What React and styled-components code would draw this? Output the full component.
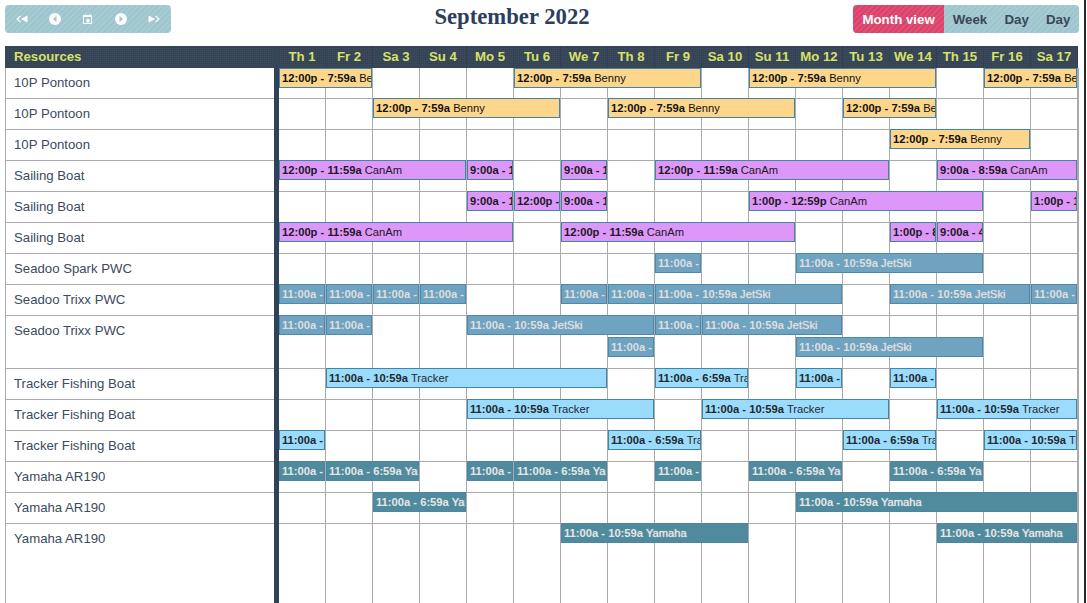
import React from 'react'
import styled, { createGlobalStyle } from 'styled-components'

const GlobalStyle = createGlobalStyle`
  html, body { margin: 0; padding: 0; height: 100%; background: #fff; overflow: hidden; }
  #root { height: 100%; }
`

const stripes = (a, b) => `repeating-linear-gradient(135deg, ${a} 0 2px, ${b} 2px 4px)`

const Page = styled.div`
  display: flex;
  height: 603px;
  overflow: hidden;
  font-family: "Liberation Sans", Arial, sans-serif;
`
const Main = styled.div`
  width: 1074px;
  margin-left: 5px;
  padding-top: 5px;
  display: flex;
  flex-direction: column;
`
const WindowEdge = styled.div`
  width: 2px;
  margin-left: 5px;
  background: #23282b;
`
const Toolbar = styled.div`
  display: flex;
  justify-content: space-between;
  align-items: flex-start;
  height: 28px;
  margin-bottom: 13px;
`
const Title = styled.h2`
  margin: 0;
  font-family: "Liberation Serif", "Times New Roman", serif;
  font-size: 22.7px;
  line-height: 24px;
  font-weight: bold;
  color: #2c3e5c;
`
const ButtonGroup = styled.div`
  display: flex;
  height: 28px;
  border-radius: 4px;
  overflow: hidden;
  background: ${stripes('#9dc5ce', '#a7cbd3')};
`
const NavButton = styled.div`
  width: 33.2px;
  display: flex;
  align-items: center;
  justify-content: center;
`
const ViewButton = styled.div`
  display: flex;
  align-items: center;
  padding: 0 ${p => (p.$active ? '9.3px' : '8.6px')};
  font-size: 13.3px;
  font-weight: bold;
  color: ${p => (p.$active ? '#fff' : '#3b4657')};
  background: ${p => (p.$active ? stripes('#d9436a', '#e04f75') : 'transparent')};
`
const HeaderRow = styled.div`
  display: flex;
  width: 1073px;
  height: 22px;
  color: #d6e268;
  font-size: 13.2px;
  font-weight: bold;
  line-height: 21px;
  background-color: #3c4b5d;
  background-image:
    repeating-linear-gradient(90deg, rgba(20, 32, 46, 0.12) 0 1px, transparent 1px 2px),
    repeating-linear-gradient(0deg, rgba(20, 32, 46, 0.12) 0 1px, transparent 1px 2px);
`
const ResourcesHead = styled.div`
  width: 260px;
  padding-left: 9px;
  border-right: 5px solid #34465a;
`
const DayHead = styled.div`
  width: 46px;
  text-align: center;
  border-right: 1px solid #2f4054;
`
const Body = styled.div`
  flex: 1;
  display: flex;
  min-height: 0;
`
const ResourceColumn = styled.div`
  width: 268px;
  border-left: 1px solid #aaa;
`
const ResourceRow = styled.div`
  box-sizing: border-box;
  height: ${p => 31 + (p.$lanes - 1) * 22}px;
  padding: 6px 0 0 8px;
  border-bottom: 1px solid #aaa;
  font-size: 13.2px;
  line-height: 17px;
  color: #3c4a5e;
  &:last-child { border-bottom: none; }
`
const Divider = styled.div`
  width: 5px;
  background: #2f4257;
`
const DayColumn = styled.div`
  width: 799px;
  border-right: 1px solid #aaa;
  background: repeating-linear-gradient(90deg, transparent 0 46px, #aaa 46px 47px);
`
const EventRow = styled.div`
  box-sizing: border-box;
  display: grid;
  grid-template-columns: repeat(17, 47px);
  grid-auto-rows: 22px;
  height: ${p => 31 + (p.$lanes - 1) * 22}px;
  border-bottom: 1px solid #aaa;
  &:first-child { padding-top: 1px; }
  &:last-child { border-bottom: none; }
`
const kinds = {
  benny: { bg: '#fed68b', color: '#111', border: '#3f86a8' },
  canam: { bg: '#dc97f9', color: '#1d1a22', border: '#3f86a8' },
  jetski: { bg: '#6fa3c0', color: '#dedede', border: '#4a8ab0', heavy: true },
  tracker: { bg: '#9bdcfd', color: '#23282c', border: '#3f86a8' },
  yamaha: { bg: '#508b9d', color: '#e6e6e6', border: '#4b87a5', heavy: true },
}
const Event = styled.div`
  box-sizing: border-box;
  position: relative;
  height: 20px;
  margin: -1px 1px 0 0;
  padding: 0 0 0 2px;
  overflow: hidden;
  white-space: nowrap;
  font-size: 11.2px;
  line-height: 18px;
  grid-column: ${p => p.$day} / span ${p => p.$span};
  grid-row: ${p => p.$lane};
  background: ${p => kinds[p.$kind].bg};
  color: ${p => kinds[p.$kind].color};
  border: 1px solid ${p => kinds[p.$kind].border};
`
const EventLabel = styled.span`
  text-shadow: ${p => (kinds[p.$kind].heavy ? '0 0 1px currentColor' : 'none')};
`

const days = ['Th 1', 'Fr 2', 'Sa 3', 'Su 4', 'Mo 5', 'Tu 6', 'We 7', 'Th 8', 'Fr 9', 'Sa 10', 'Su 11', 'Mo 12', 'Tu 13', 'We 14', 'Th 15', 'Fr 16', 'Sa 17']

const B = ['benny', '12:00p - 7:59a', 'Benny']
const C1 = ['canam', '12:00p - 11:59a', 'CanAm']
const C2 = ['canam', '9:00a - 11:59a', 'CanAm']
const C3 = ['canam', '9:00a - 8:59a', 'CanAm']
const C4 = ['canam', '1:00p - 12:59p', 'CanAm']
const C5 = ['canam', '1:00p - 8:59a', 'CanAm']
const C6 = ['canam', '9:00a - 4:59a', 'CanAm']
const J = ['jetski', '11:00a - 10:59a', 'JetSki']
const T = ['tracker', '11:00a - 10:59a', 'Tracker']
const T2 = ['tracker', '11:00a - 6:59a', 'Tracker']
const Y = ['yamaha', '11:00a - 10:59a', 'Yamaha']
const Y2 = ['yamaha', '11:00a - 6:59a', 'Yamaha']

// each event: [start day, number of days, booking, lane]
const rows = [
  { name: '10P Pontoon', events: [[1, 2, B], [6, 4, B], [11, 4, B], [16, 2, B]] },
  { name: '10P Pontoon', events: [[3, 4, B], [8, 4, B], [13, 2, B]] },
  { name: '10P Pontoon', events: [[14, 3, B]] },
  { name: 'Sailing Boat', events: [[1, 4, C1], [5, 1, C2], [7, 1, C2], [9, 5, C1], [15, 3, C3]] },
  { name: 'Sailing Boat', events: [[5, 1, C2], [6, 1, C1], [7, 1, C2], [11, 5, C4], [17, 1, C4]] },
  { name: 'Sailing Boat', events: [[1, 5, C1], [7, 5, C1], [14, 1, C5], [15, 1, C6]] },
  { name: 'Seadoo Spark PWC', events: [[9, 1, J], [12, 4, J]] },
  { name: 'Seadoo Trixx PWC', events: [[1, 1, J], [2, 1, J], [3, 1, J], [4, 1, J], [7, 1, J], [8, 1, J], [9, 4, J], [14, 3, J], [17, 1, J]] },
  { name: 'Seadoo Trixx PWC', lanes: 2, events: [[1, 1, J], [2, 1, J], [5, 4, J], [9, 1, J], [10, 3, J], [8, 1, J, 2], [12, 4, J, 2]] },
  { name: 'Tracker Fishing Boat', events: [[2, 6, T], [9, 2, T2], [12, 1, T], [14, 1, T]] },
  { name: 'Tracker Fishing Boat', events: [[5, 4, T], [10, 4, T], [15, 3, T]] },
  { name: 'Tracker Fishing Boat', events: [[1, 1, T], [8, 2, T2], [13, 2, T2], [16, 2, T]] },
  { name: 'Yamaha AR190', events: [[1, 1, Y], [2, 2, Y2], [5, 1, Y], [6, 2, Y2], [9, 1, Y], [11, 2, Y2], [14, 2, Y2]] },
  { name: 'Yamaha AR190', events: [[3, 2, Y2], [12, 6, Y]] },
  { name: 'Yamaha AR190', events: [[7, 4, Y], [15, 3, Y]] },
]

const FirstIcon = () => (
  <svg width="12" height="8" viewBox="0 0 12 8">
    <path d="M4.5 1 1 4l3.5 3" fill="none" stroke="#fff" strokeWidth="1.1" />
    <path d="M11.5 .5v7L5 4z" fill="#fff" />
  </svg>
)
const LastIcon = () => (
  <svg width="12" height="8" viewBox="0 0 12 8">
    <path d="M.5 .5v7L7 4z" fill="#fff" />
    <path d="M7.5 1 11 4 7.5 7" fill="none" stroke="#fff" strokeWidth="1.1" />
  </svg>
)
const PrevIcon = () => (
  <svg width="12" height="12" viewBox="0 0 12 12">
    <circle cx="6" cy="6" r="6" fill="#fff" />
    <path d="M7.5 3v6L4 6z" fill="#9dc5ce" />
  </svg>
)
const NextIcon = () => (
  <svg width="12" height="12" viewBox="0 0 12 12">
    <circle cx="6" cy="6" r="6" fill="#fff" />
    <path d="M4.5 3v6L8 6z" fill="#9dc5ce" />
  </svg>
)
const TodayIcon = () => (
  <svg width="9" height="10" viewBox="0 0 9 10">
    <path d="M.5 1.5h8v8h-8z" fill="none" stroke="#fff" />
    <path d="M0 1.5h9v1.5H0zM2 0h1v2H2zM6 0h1v2H6zM3.5 5h3v3.5h-3z" fill="#fff" />
  </svg>
)

const App = () => (
  <>
    <GlobalStyle />
    <Page>
      <Main>
        <Toolbar>
          <ButtonGroup>
            <NavButton><FirstIcon /></NavButton>
            <NavButton><PrevIcon /></NavButton>
            <NavButton><TodayIcon /></NavButton>
            <NavButton><NextIcon /></NavButton>
            <NavButton><LastIcon /></NavButton>
          </ButtonGroup>
          <Title>September 2022</Title>
          <ButtonGroup>
            <ViewButton $active>Month view</ViewButton>
            <ViewButton>Week</ViewButton>
            <ViewButton>Day</ViewButton>
            <ViewButton>Day</ViewButton>
          </ButtonGroup>
        </Toolbar>
        <HeaderRow>
          <ResourcesHead>Resources</ResourcesHead>
          {days.map(d => <DayHead key={d}>{d}</DayHead>)}
        </HeaderRow>
        <Body>
          <ResourceColumn>
            {rows.map((r, i) => (
              <ResourceRow key={i} $lanes={r.lanes || 1}>{r.name}</ResourceRow>
            ))}
          </ResourceColumn>
          <Divider />
          <DayColumn>
            {rows.map((r, i) => (
              <EventRow key={i} $lanes={r.lanes || 1}>
                {r.events.map(([day, span, [kind, time, label], lane = 1]) => (
                  <Event key={`${day}-${lane}`} $day={day} $span={span} $lane={lane} $kind={kind}>
                    <b>{time}</b> <EventLabel $kind={kind}>{label}</EventLabel>
                  </Event>
                ))}
              </EventRow>
            ))}
          </DayColumn>
        </Body>
      </Main>
      <WindowEdge />
    </Page>
  </>
)

export default App
